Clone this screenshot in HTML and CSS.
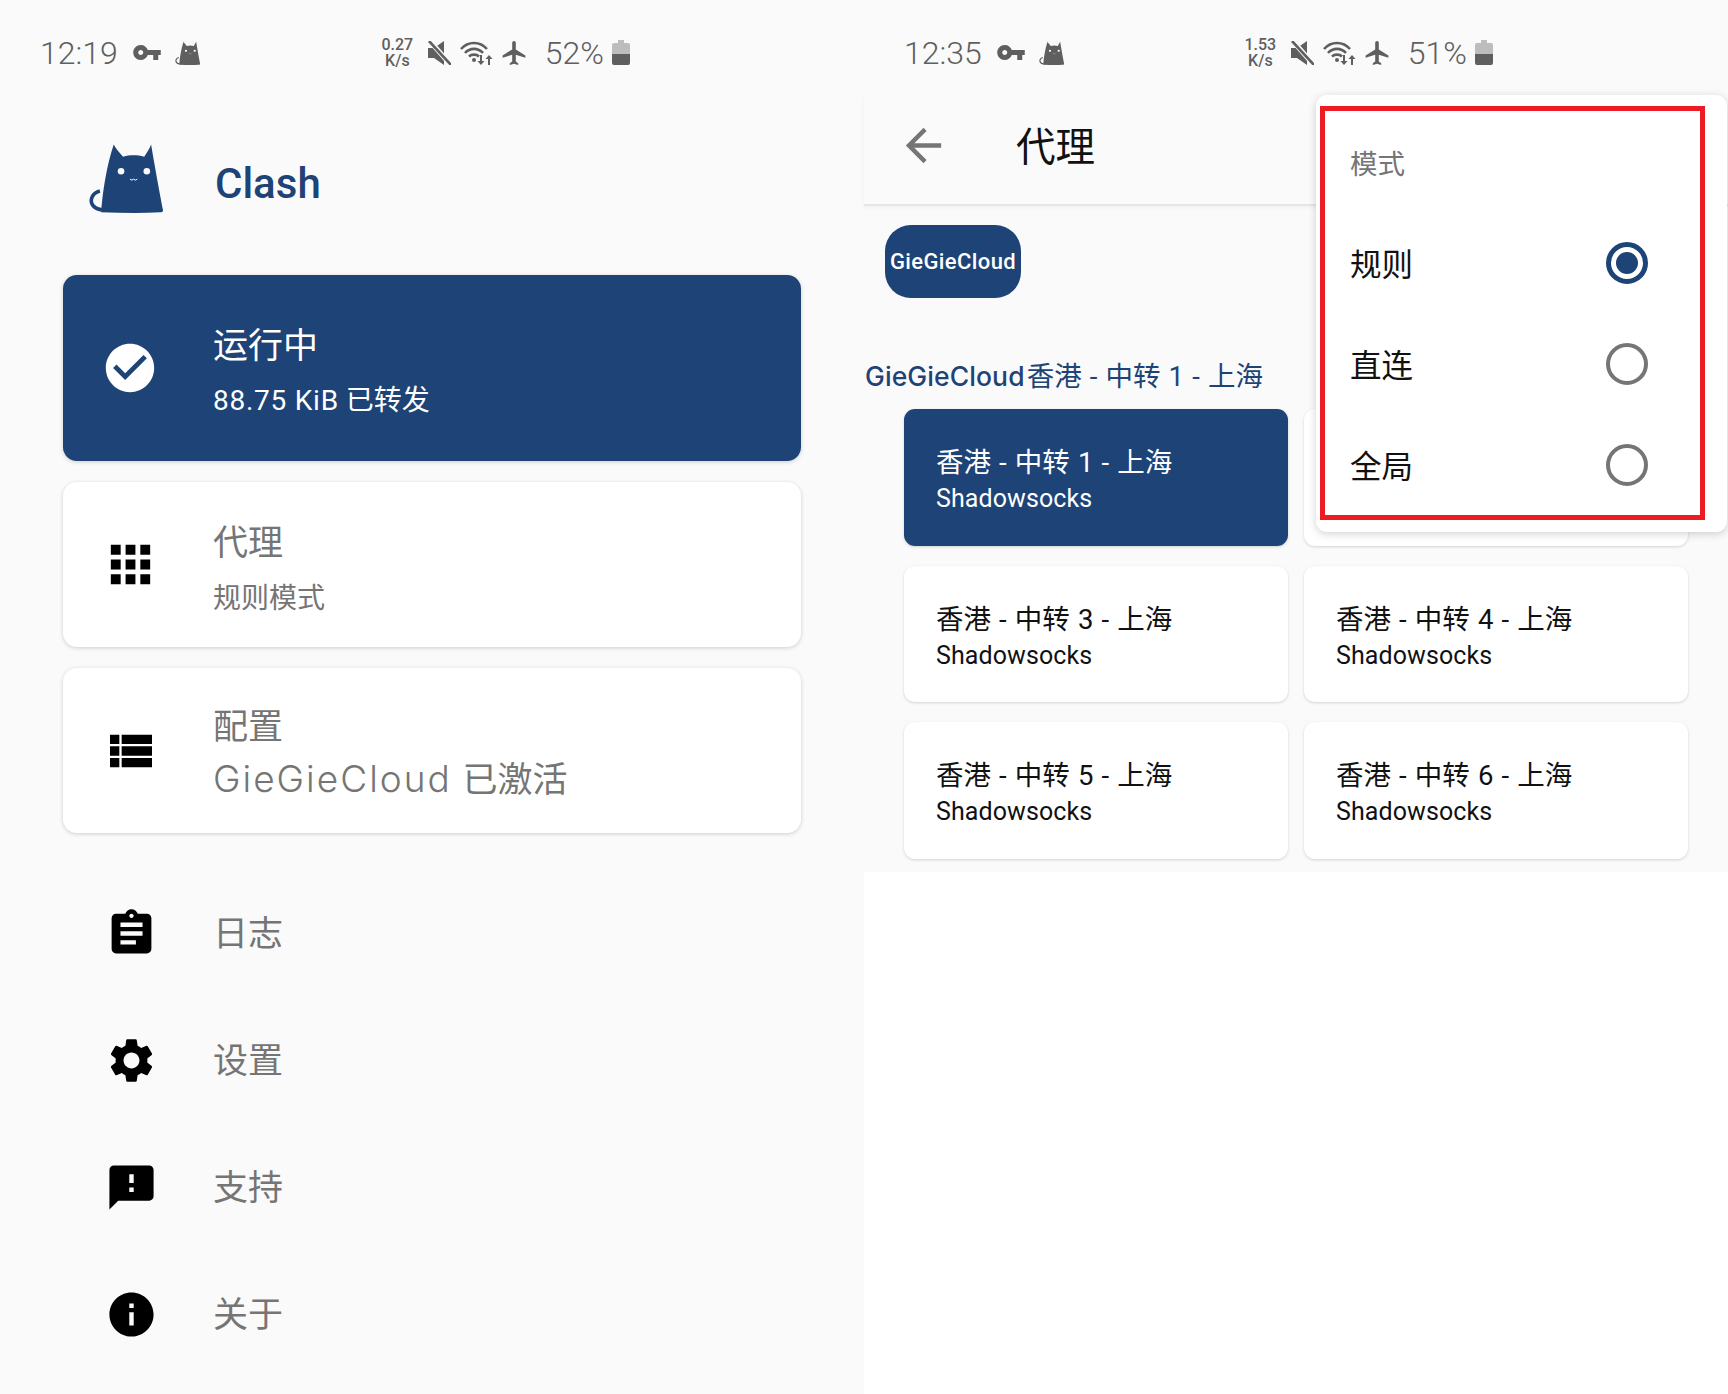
FILE: index.html
```html
<!DOCTYPE html>
<html lang="zh-CN">
<head>
<meta charset="utf-8">
<title>Clash</title>
<link rel="stylesheet" href="styles.css">
</head>
<body>
<svg class="defs" width="0" height="0" aria-hidden="true">
  <defs>
    <g id="cat">
      <path d="M130 47C136 60 148 72 158 84C180 78 200 78 222 84C230 72 238 60 243 47C250 90 270 200 279 245C280 250 276 252 270 252C210 256 150 254 92 252C95 200 108 110 130 47Z"/>
      <path d="M100 245C70 245 55 225 65 205C70 195 80 190 88 188" fill="none" stroke="currentColor" stroke-width="11"/>
      <circle cx="152" cy="128" r="10" fill="#fafafa"/>
      <circle cx="230" cy="128" r="10" fill="#fafafa"/>
      <path d="M179 152l6 3 5-3 5 3 6-3" fill="none" stroke="#fafafa" stroke-width="3"/>
    </g>
    <g id="key"><path d="M12.65 10C11.83 7.67 9.61 6 7 6c-3.31 0-6 2.69-6 6s2.69 6 6 6c2.61 0 4.83-1.67 5.65-4H17v4h4v-4h2v-4H12.65zM7 14c-1.1 0-2-.9-2-2s.9-2 2-2 2 .9 2 2-.9 2-2 2z"/></g>
    <g id="mute">
      <path d="M1 7h6L17 0v24L7 17H1z"/>
      <path d="M1 -2L24 24" stroke="#fafafa" stroke-width="5"/>
      <path d="M2 0L24 24" stroke="currentColor" stroke-width="2.6"/>
    </g>
    <g id="wifi">
      <g fill="none" stroke="currentColor" stroke-width="2.6">
        <path d="M1 8C8 0 20 0 27 8"/>
        <path d="M5 12C10 6.500 18 6.500 23 12"/>
        <path d="M9 15.500C11.500 13 16.500 13 19 15.500"/>
      </g>
      <circle cx="14" cy="19" r="2"/>
      <path d="M20 14h2v6h2.500l-3.500 4-3.500-4H20z"/>
      <path d="M29 14l3.500 4H30v6h-2v-6h-2.500z"/>
    </g>
    <g id="plane"><path d="M21 16v-2l-8-5V3.500c0-.83-.67-1.500-1.500-1.500S10 2.670 10 3.500V9l-8 5v2l8-2.500V19l-2 1.500V22l3.500-1 3.500 1v-1.500L13 19v-5.500l8 2.500z"/></g>
    <g id="battery">
      <path d="M6 0h6v3h4a2 2 0 0 1 2 2v9H0V5a2 2 0 0 1 2-2h4z" fill="#bdbdbd"/>
      <path d="M0 14h18v9a2 2 0 0 1-2 2H2a2 2 0 0 1-2-2z"/>
    </g>
  </defs>
</svg>
<main class="screen">
  <section class="panel panel-left">
    <div class="status">
      <div class="status-group">
        <span class="clock">12:19</span>
        <svg class="ic-key" viewBox="1 6 22 12"><use href="#key"/></svg>
        <svg class="ic-cat" viewBox="55 40 230 215"><use href="#cat"/></svg>
      </div>
      <div class="status-group">
        <span class="speed">0.27<br>K/s</span>
        <svg class="ic-mute" viewBox="0 0 24 24"><use href="#mute"/></svg>
        <svg class="ic-wifi" viewBox="0 0 35 24"><use href="#wifi"/></svg>
        <svg class="ic-plane" viewBox="2 2 19 20"><use href="#plane"/></svg>
        <span class="battery-pct">52%</span>
        <svg class="ic-battery" viewBox="0 0 18 25"><use href="#battery"/></svg>
      </div>
    </div>
    <header class="brand">
      <svg class="brand-logo" viewBox="55 45 230 210"><use href="#cat"/></svg>
      <span class="brand-name">Clash</span>
    </header>
    <div class="cards">
      <div class="card card-active card-run">
        <span class="slot"><svg class="icon icon-check" viewBox="0 0 24 24"><path d="M12 2C6.480 2 2 6.480 2 12s4.480 10 10 10 10-4.480 10-10S17.520 2 12 2zm-2 15l-5-5 1.410-1.410L10 14.170l7.590-7.590L19 8l-9 9z"/></svg></span>
        <div class="card-text text-run">
          <span class="card-title">运行中</span>
          <span class="card-sub"><span class="traffic">88.75 KiB</span> 已转发</span>
        </div>
      </div>
      <div class="card card-small">
        <span class="slot"><svg class="icon icon-apps" viewBox="0 0 24 24"><path d="M4 8h4V4H4v4zm6 12h4v-4h-4v4zm-6 0h4v-4H4v4zm0-6h4v-4H4v4zm6 0h4v-4h-4v4zm6-10v4h4V4h-4zm-6 4h4V4h-4v4zm6 6h4v-4h-4v4zm0 6h4v-4h-4v4z"/></svg></span>
        <div class="card-text text-proxy">
          <span class="card-title">代理</span>
          <span class="card-sub">规则模式</span>
        </div>
      </div>
      <div class="card card-small">
        <span class="slot"><svg class="icon icon-list" viewBox="0 0 24 24"><path d="M3 14h4v-4H3v4zm0 5h4v-4H3v4zM3 9h4V5H3v4zm5 5h13v-4H8v4zm0 5h13v-4H8v4zM8 5v4h13V5H8z"/></svg></span>
        <div class="card-text text-profile">
          <span class="card-title">配置</span>
          <span class="card-sub card-sub-wide"><span class="profile-name">GieGieCloud</span> 已激活</span>
        </div>
      </div>
    </div>
    <nav class="menu">
      <div class="menu-row">
        <span class="slot"><svg class="icon" viewBox="0 0 24 24"><path d="M19 3h-4.180C14.400 1.840 13.300 1 12 1c-1.300 0-2.400.84-2.820 2H5c-1.100 0-2 .9-2 2v14c0 1.100.9 2 2 2h14c1.100 0 2-.9 2-2V5c0-1.100-.9-2-2-2zm-7 0c.55 0 1 .45 1 1s-.45 1-1 1-1-.45-1-1 .45-1 1-1zm2 14H7v-2h7v2zm3-4H7v-2h10v2zm0-4H7V7h10v2z"/></svg></span>
        <span class="menu-label">日志</span>
      </div>
      <div class="menu-row">
        <span class="slot"><svg class="icon" viewBox="0 0 24 24"><path d="M19.140 12.940c.04-.3.06-.61.06-.94 0-.32-.02-.64-.07-.94l2.030-1.580c.18-.14.23-.41.12-.61l-1.920-3.320c-.12-.22-.37-.29-.59-.22l-2.390.96c-.5-.38-1.030-.7-1.620-.94l-.36-2.540c-.04-.24-.24-.41-.48-.41h-3.840c-.24 0-.43.17-.47.41l-.36 2.540c-.59.24-1.130.57-1.620.94l-2.390-.96c-.22-.08-.47 0-.59.22L2.740 8.870c-.12.21-.08.47.12.61l2.030 1.580c-.05.3-.09.63-.09.94s.02.64.07.94l-2.030 1.580c-.18.14-.23.41-.12.61l1.920 3.320c.12.22.37.29.59.22l2.390-.96c.5.38 1.030.7 1.620.94l.36 2.540c.05.24.24.41.48.41h3.840c.24 0 .44-.17.47-.41l.36-2.540c.59-.24 1.130-.56 1.620-.94l2.390.96c.22.08.47 0 .59-.22l1.920-3.320c.12-.22.07-.47-.12-.61l-2.010-1.580zM12 15.600c-1.980 0-3.600-1.620-3.600-3.600s1.620-3.600 3.600-3.600 3.600 1.620 3.600 3.600-1.620 3.600-3.600 3.600z"/></svg></span>
        <span class="menu-label">设置</span>
      </div>
      <div class="menu-row">
        <span class="slot"><svg class="icon" viewBox="0 0 24 24"><path d="M20 2H4c-1.100 0-1.990.9-1.990 2L2 22l4-4h14c1.100 0 2-.9 2-2V4c0-1.100-.9-2-2-2zm-7 12h-2v-2h2v2zm0-4h-2V6h2v4z"/></svg></span>
        <span class="menu-label">支持</span>
      </div>
      <div class="menu-row">
        <span class="slot"><svg class="icon" viewBox="0 0 24 24"><path d="M12 2C6.480 2 2 6.480 2 12s4.480 10 10 10 10-4.480 10-10S17.520 2 12 2zm1 15h-2v-6h2v6zm0-8h-2V7h2v2z"/></svg></span>
        <span class="menu-label">关于</span>
      </div>
    </nav>
  </section>

  <section class="panel panel-right">
    <div class="proxy-view">
      <div class="status status-right">
        <div class="status-group">
          <span class="clock">12:35</span>
          <svg class="ic-key" viewBox="1 6 22 12"><use href="#key"/></svg>
          <svg class="ic-cat" viewBox="55 40 230 215"><use href="#cat"/></svg>
        </div>
        <div class="status-group">
          <span class="speed">1.53<br>K/s</span>
          <svg class="ic-mute" viewBox="0 0 24 24"><use href="#mute"/></svg>
          <svg class="ic-wifi" viewBox="0 0 35 24"><use href="#wifi"/></svg>
          <svg class="ic-plane" viewBox="2 2 19 20"><use href="#plane"/></svg>
          <span class="battery-pct">51%</span>
          <svg class="ic-battery" viewBox="0 0 18 25"><use href="#battery"/></svg>
        </div>
      </div>
      <div class="toolbar">
        <svg class="back" viewBox="0 0 24 24"><path d="M20 11H7.830l5.590-5.590L12 4l-8 8 8 8 1.410-1.410L7.830 13H20v-2z"/></svg>
        <span class="toolbar-title">代理</span>
      </div>
      <div class="tabs"><span class="tab">GieGieCloud</span></div>
      <div class="group-title"><span class="group-name">GieGieCloud</span>香港 - 中转 1 - 上海</div>
      <div class="proxy-grid">
        <div class="proxy proxy-active"><span class="proxy-name">香港 - 中转 1 - 上海</span><span class="proxy-type">Shadowsocks</span></div>
        <div class="proxy"></div>
        <div class="proxy"><span class="proxy-name">香港 - 中转 3 - 上海</span><span class="proxy-type">Shadowsocks</span></div>
        <div class="proxy"><span class="proxy-name">香港 - 中转 4 - 上海</span><span class="proxy-type">Shadowsocks</span></div>
        <div class="proxy"><span class="proxy-name">香港 - 中转 5 - 上海</span><span class="proxy-type">Shadowsocks</span></div>
        <div class="proxy"><span class="proxy-name">香港 - 中转 6 - 上海</span><span class="proxy-type">Shadowsocks</span></div>
      </div>
    </div>
    <aside class="popup">
      <div class="popup-frame">
        <div class="popup-heading">模式</div>
        <div class="option"><span class="option-label">规则</span><span class="radio radio-on"></span></div>
        <div class="option"><span class="option-label">直连</span><span class="radio"></span></div>
        <div class="option"><span class="option-label">全局</span><span class="radio"></span></div>
      </div>
    </aside>
  </section>
</main>
</body>
</html>
```

FILE: styles.css
```css
* { box-sizing: border-box; }

html, body {
  margin: 0;
  padding: 0;
  background: #fff;
}

body {
  font-family: Roboto, "Noto Sans CJK SC", sans-serif;
  color: #111;
}

.defs { display: block; height: 0; }

.screen {
  display: grid;
  grid-template-columns: 864px 864px;
  width: 1728px;
  height: 1394px;
  overflow: hidden;
}

.panel { height: 1394px; }

.panel-left { background: #fafafa; }

.panel-right {
  position: relative;
  background: #fff;
}

.proxy-view {
  height: 872px;
  background: #fafafa;
}

/* status bar */
.status {
  height: 96px;
  padding: 9px 234px 0 40px;
  display: flex;
  align-items: center;
  justify-content: space-between;
  color: #5f5f5f;
  fill: #5f5f5f;
}

.status-right { padding-right: 235px; }

.status-group {
  display: flex;
  align-items: center;
}

.clock, .battery-pct {
  font-size: 32px;
  font-weight: 300;
  line-height: 40px;
}

.ic-key { width: 28px; height: 15px; margin-left: 15px; }
.ic-cat { width: 26px; height: 24px; margin-left: 14px; }

.speed {
  width: 33px;
  font-size: 16px;
  font-weight: 500;
  line-height: 16px;
  text-align: center;
}

.ic-mute { width: 24px; height: 24px; margin-left: 13px; }
.ic-wifi { width: 35px; height: 24px; margin-left: 9px; }
.ic-plane { width: 26px; height: 24px; margin-left: 6px; }
.battery-pct { margin-left: 18px; }
.ic-battery { width: 18px; height: 25px; margin-left: 8px; }

/* brand */
.brand {
  height: 179px;
  padding: 47px 0 0 89px;
  display: flex;
  align-items: flex-start;
  color: #1e4376;
  fill: #1e4376;
}

.brand-logo { width: 76px; height: 71px; }

.brand-name {
  margin: 15px 0 0 50px;
  font-size: 42px;
  font-weight: 500;
  line-height: 52px;
}

/* cards */
.cards {
  display: flex;
  flex-direction: column;
  gap: 21px;
  padding: 0 63px;
}

.card {
  display: flex;
  align-items: center;
  background: #fff;
  border-radius: 14px;
  box-shadow: 0 1px 4px rgba(0, 0, 0, .18);
  padding-left: 37px;
  color: #757575;
}

.card-run { height: 186px; }
.card-small { height: 165px; }

.card-active {
  background: #1e4376;
  color: #fff;
}

.slot {
  flex: none;
  width: 62px;
  margin-right: 51px;
  display: flex;
  justify-content: center;
  align-items: center;
  fill: #000;
}

.card-active .slot { fill: #fff; }

.icon {
  flex: none;
  width: 53px;
  height: 53px;
  display: block;
}

.icon-check { width: 58px; height: 58px; margin-left: -2px; }
.icon-apps { width: 59px; height: 59px; margin-left: -2px; }
.icon-list { width: 56px; height: 56px; }

.card-text {
  display: flex;
  flex-direction: column;
}

.card-title {
  font-size: 35px;
  line-height: 48px;
}

.card-sub {
  font-size: 28px;
  line-height: 40px;
}

.traffic { letter-spacing: .75px; }

.text-run { margin-top: 8px; gap: 10px; }
.text-proxy { margin-top: 9px; gap: 11px; }
.text-profile { margin-top: 4px; gap: 7px; }

.text-run .card-title { color: #fff; }

.card-sub-wide {
  font-size: 35px;
  word-spacing: 2px;
}

.profile-name {
  font-family: Inter, Roboto, sans-serif;
  font-size: 37px;
  font-weight: 300;
  letter-spacing: 2px;
}

/* menu */
.menu {
  padding: 37px 63px 0;
}

.menu-row {
  height: 127px;
  padding-left: 37px;
  display: flex;
  align-items: center;
}

.menu-label {
  margin-top: 2px;
  font-size: 35px;
  line-height: 48px;
  color: #757575;
}

/* proxy screen */
.toolbar {
  height: 110px;
  display: flex;
  align-items: center;
  padding: 0 0 10px 33px;
  border-bottom: 2px solid #e6e6e6;
  box-shadow: 0 2px 4px rgba(0, 0, 0, .04);
}

.back {
  width: 53px;
  height: 53px;
  fill: #757575;
}

.toolbar-title {
  margin: 6px 0 0 66px;
  font-size: 39.500px;
  line-height: 52px;
  color: #111;
}

.tabs {
  display: flex;
  padding: 19px 0 0 21px;
}

.tab {
  width: 136px;
  height: 73px;
  display: flex;
  align-items: center;
  justify-content: center;
  border-radius: 26px;
  background: #1e4376;
  color: #fff;
  font-size: 22px;
  font-weight: 500;
  letter-spacing: .4px;
  white-space: nowrap;
}

.group-title {
  margin-top: 58px;
  padding-left: 1px;
  font-size: 27.500px;
  line-height: 40px;
  word-spacing: 1.300px;
  color: #1e4376;
}

.group-name {
  margin-right: 2px;
  font-family: Inter, Roboto, sans-serif;
  font-size: 26.500px;
  font-weight: 500;
  letter-spacing: .1px;
}

.proxy-grid {
  margin-top: 12px;
  padding: 0 40px 0 40px;
  display: grid;
  grid-template-columns: 384px 384px;
  grid-auto-rows: 136.500px;
  column-gap: 16px;
  row-gap: 20px;
}

.proxy {
  display: flex;
  flex-direction: column;
  padding: 36px 0 0 32px;
  background: #fff;
  border-radius: 11px;
  box-shadow: 0 1px 3px rgba(0, 0, 0, .16);
  color: #111;
}

.proxy-active {
  background: #1e4376;
  color: #fff;
}

.proxy-name {
  font-size: 27.500px;
  line-height: 35px;
  word-spacing: 1.300px;
}

.proxy-type {
  font-size: 25px;
  line-height: 37px;
  letter-spacing: .1px;
}

/* mode popup */
.popup {
  position: absolute;
  top: 95px;
  left: 452px;
  width: 411px;
  height: 437px;
  padding: 11px 0 0 4px;
  background: #fff;
  border-radius: 11px;
  box-shadow: 0 2px 8px rgba(0, 0, 0, .18);
}

.popup-frame {
  width: 385px;
  height: 414px;
  border: 5px solid #ed1c24;
  padding: 0 52px 0 25px;
}

.popup-heading {
  height: 101px;
  padding-top: 34px;
  font-size: 27.500px;
  line-height: 40px;
  color: #757575;
}

.option {
  height: 101px;
  display: flex;
  align-items: center;
  justify-content: space-between;
  font-size: 31.500px;
  color: #111;
}

.option-label { margin-top: -2px; }

.radio {
  flex: none;
  width: 42px;
  height: 42px;
  border: 4px solid #757575;
  border-radius: 50%;
  background: #fff;
}

.radio-on {
  border-color: #1e4376;
  border-width: 5px;
  padding: 5px;
  background: #1e4376 content-box;
}
```
